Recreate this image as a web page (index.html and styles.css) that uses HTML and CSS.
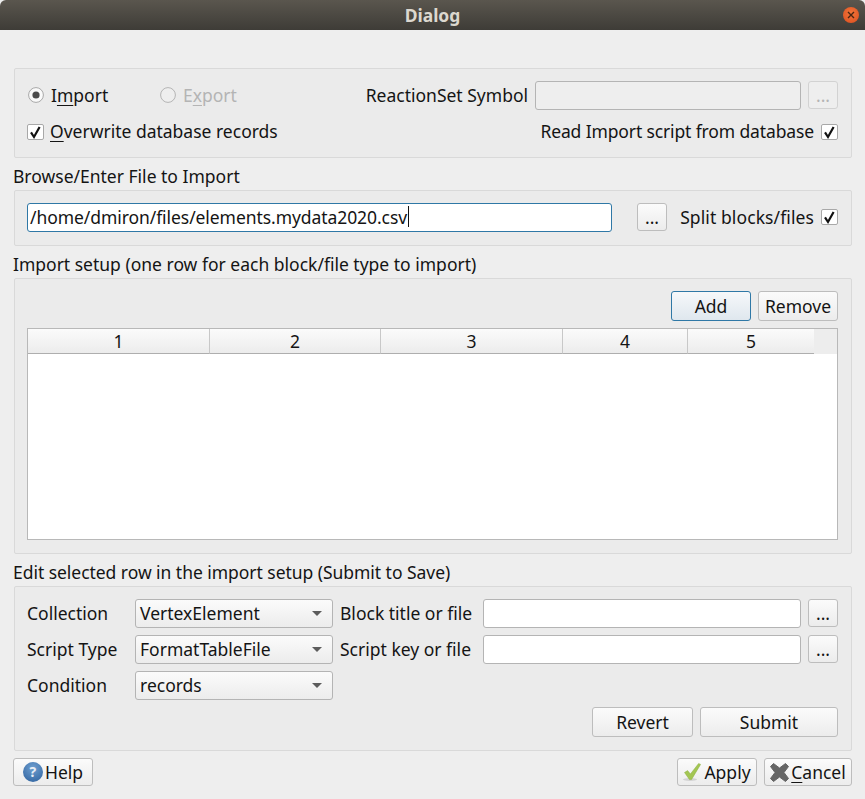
FILE: index.html
```html
<!DOCTYPE html>
<html lang="en">
<head>
    <meta charset="UTF-8">
    <meta name="viewport" content="width=device-width, initial-scale=1.0">
    <title>Dialog</title>
    <link rel="stylesheet" href="styles.css">
</head>
<body>
    <div class="window">
        <div class="titlebar">
            <span class="title">Dialog</span>
            <span class="close">
                <svg width="8" height="8" viewBox="0 0 8 8"><path d="M1 1L7 7M7 1L1 7" stroke="#4a2512" stroke-width="1.4" fill="none"/></svg>
            </span>
        </div>

        <div class="content">
            <div class="group group-mode">
                <div class="row">
                    <label class="option option-import">
                        <svg class="mark" width="16" height="16" viewBox="0 0 16 16"><circle cx="8" cy="8" r="7.4" fill="#fafafa" stroke="#a8a8a8"/><circle cx="8" cy="8" r="3.6" fill="#4c4c4c"/></svg>
                        <span>I<u>m</u>port</span>
                    </label>
                    <label class="option disabled">
                        <svg class="mark" width="16" height="16" viewBox="0 0 16 16"><circle cx="8" cy="8" r="7.4" fill="#eeeeee" stroke="#b4b4b4"/></svg>
                        <span>E<u>x</u>port</span>
                    </label>
                    <span class="text push">ReactionSet Symbol</span>
                    <div class="input input-symbol disabled-input"></div>
                    <button class="btn btn-dots" disabled>...</button>
                </div>
                <div class="row row-checks">
                    <label class="option">
                        <svg class="mark" width="17" height="16" viewBox="0 0 17 16"><rect x="0.5" y="0.5" width="16" height="15" rx="1.5" fill="#fff" stroke="#a8a8a8"/><path d="M4 8.4L7 13L12.6 3" fill="none" stroke="#111" stroke-width="2.2"/></svg>
                        <span><u>O</u>verwrite database records</span>
                    </label>
                    <label class="option option-check-right push">
                        <span class="read-script">Read Import script from database</span>
                        <svg class="mark" width="17" height="16" viewBox="0 0 17 16"><rect x="0.5" y="0.5" width="16" height="15" rx="1.5" fill="#fff" stroke="#a8a8a8"/><path d="M4 8.4L7 13L12.6 3" fill="none" stroke="#111" stroke-width="2.2"/></svg>
                    </label>
                </div>
            </div>

            <div class="section-label">Browse/Enter File to Import</div>
            <div class="group group-file">
                <div class="row">
                    <div class="input input-file">/home/dmiron/files/elements.mydata2020.csv<span class="caret"></span></div>
                    <button class="btn btn-dots btn-browse">...</button>
                    <label class="option option-check-right push">
                        <span class="split-files">Split blocks/files</span>
                        <svg class="mark" width="17" height="16" viewBox="0 0 17 16"><rect x="0.5" y="0.5" width="16" height="15" rx="1.5" fill="#fff" stroke="#a8a8a8"/><path d="M4 8.4L7 13L12.6 3" fill="none" stroke="#111" stroke-width="2.2"/></svg>
                    </label>
                </div>
            </div>

            <div class="section-label">Import setup (one row for each block/file type to import)</div>
            <div class="group group-setup">
                <div class="row table-actions">
                    <button class="btn btn-add">Add</button>
                    <button class="btn btn-remove">Remove</button>
                </div>
                <div class="table">
                    <div class="table-head">
                        <div class="col col-1">1</div>
                        <div class="col col-2">2</div>
                        <div class="col col-3">3</div>
                        <div class="col col-4">4</div>
                        <div class="col col-5">5</div>
                    </div>
                </div>
            </div>

            <div class="section-label section-edit">Edit selected row in the import setup (Submit to Save)</div>
            <div class="group group-edit">
                <div class="row edit-row">
                    <span class="text field-label">Collection</span>
                    <div class="combo">VertexElement<span class="arrow"></span></div>
                    <span class="text file-label">Block title or file</span>
                    <div class="input input-edit"></div>
                    <button class="btn btn-dots">...</button>
                </div>
                <div class="row edit-row">
                    <span class="text field-label">Script Type</span>
                    <div class="combo">FormatTableFile<span class="arrow"></span></div>
                    <span class="text file-label">Script key or file</span>
                    <div class="input input-edit"></div>
                    <button class="btn btn-dots">...</button>
                </div>
                <div class="row edit-row">
                    <span class="text field-label">Condition</span>
                    <div class="combo">records<span class="arrow"></span></div>
                </div>
                <div class="row edit-actions">
                    <button class="btn btn-revert">Revert</button>
                    <button class="btn btn-submit">Submit</button>
                </div>
            </div>

            <div class="footer">
                <button class="btn btn-footer btn-help">
                    <span class="help-icon">?</span>Help
                </button>
                <button class="btn btn-footer btn-apply push">
                    <svg width="19" height="20" viewBox="0 0 19 20"><ellipse cx="7" cy="17.5" rx="7" ry="1.5" fill="#d2d2d2"/><path d="M1.5 10.5L4.6 8.6L7.4 12L15.6 1.5L17.6 2.4L8.6 17.4L6.4 17.4Z" fill="#a3c653" stroke="#8fb043" stroke-width="0.5"/></svg>
                    Apply
                </button>
                <button class="btn btn-footer btn-cancel">
                    <svg width="19" height="19" viewBox="0 0 19 19"><path d="M0.5 3.5L3.5 0.5L9.5 5L15.5 0.5L18.5 3.5L14 9.5L18.5 15.5L15.5 18.5L9.5 14L3.5 18.5L0.5 15.5L5 9.5Z" fill="#656565" stroke="#656565" stroke-linejoin="round"/></svg>
                    <span><u>C</u>ancel</span>
                </button>
            </div>
        </div>
    </div>
</body>
</html>
```

FILE: styles.css
```css
* {
    box-sizing: border-box;
}
html, body {
    margin: 0;
    padding: 0;
    background-color: #eeeeee;
}
body {
    width: 865px;
    height: 799px;
    overflow: hidden;
    font-family: "Noto Sans", "Open Sans", sans-serif;
    font-size: 17.5px;
    line-height: 22px;
    color: #141414;
}
u {
    text-underline-offset: 3px;
}

/* title bar */
.titlebar {
    height: 30px;
    display: flex;
    align-items: center;
    justify-content: center;
    position: relative;
    background: linear-gradient(#5a564e, #3e3c37);
    border-radius: 6px 6px 0 0;
}
.title {
    color: #dcd8cf;
    font-weight: bold;
    font-size: 17.5px;
}
.close {
    position: absolute;
    right: 6px;
    top: 7px;
    width: 16px;
    height: 16px;
    border-radius: 50%;
    background: radial-gradient(circle at 50% 40%, #f4763a, #db4d1f);
    display: flex;
    align-items: center;
    justify-content: center;
}

/* layout */
.content {
    padding: 38px 13px 0 14px;
}
.group {
    background-color: #ebebeb;
    border: 1px solid #d9d9d9;
    border-radius: 2px;
    padding: 12px 13px 12px 12px;
}
.row {
    display: flex;
    align-items: flex-start;
}
.row > * {
    flex: none;
}
.push {
    margin-left: auto;
}
.section-label {
    height: 32px;
    margin-left: -1px;
    padding-top: 7px;
}
.section-edit {
    letter-spacing: -0.04px;
}
.group-mode {
    height: 90px;
}
.row-checks {
    margin-top: 10px;
    height: 22px;
}
.group-file {
    height: 56px;
}
.group-setup {
    height: 276px;
}
.group-edit {
    height: 165px;
}

/* radio and check options */
.option {
    display: flex;
    align-items: center;
    gap: 6px;
    min-height: 28px;
}
.row-checks .option {
    min-height: 22px;
}
.row-checks .option span {
    margin-bottom: 2px;
}
.option-import {
    width: 132px;
    margin-left: 1px;
    gap: 7px;
}
.option-check-right {
    gap: 7px;
}
.read-script {
    letter-spacing: -0.13px;
}
.split-files {
    letter-spacing: 0.1px;
}
.option.disabled {
    color: #b4b4b4;
    gap: 7px;
}
.mark {
    flex: none;
}
.text {
    white-space: nowrap;
    line-height: 29px;
}

/* inputs */
.input {
    height: 29px;
    background-color: #fff;
    border: 1px solid #b4b4b4;
    border-radius: 3px;
}
.input-symbol {
    width: 266px;
    margin: 0 7px;
}
.disabled-input {
    background-color: #eeeeee;
}
.input-file {
    width: 585px;
    border-color: #2f78a6;
    padding: 2px 0 0 2px;
    display: flex;
    white-space: nowrap;
    letter-spacing: -0.07px;
}
.caret {
    width: 1px;
    height: 21px;
    background-color: #111;
    margin-left: 1px;
}
.input-edit {
    width: 318px;
    margin-right: 7px;
}

/* buttons */
.btn {
    height: 28px;
    padding: 0;
    font: inherit;
    color: inherit;
    background: linear-gradient(#fbfbfb, #ececec);
    border: 1px solid #bdbdbd;
    border-radius: 3px;
}
.btn:disabled {
    color: #b4b4b4;
    background: #eeeeee;
    border-color: #d2d2d2;
}
.btn-dots {
    width: 30px;
}
.btn-browse {
    margin-left: 25px;
}
.btn-add {
    width: 80px;
    height: 30px;
    margin-left: auto;
    border-color: #2f78a6;
    background: linear-gradient(#f6f8fa, #dfe7ee);
}
.btn-remove {
    width: 80px;
    height: 30px;
    margin-left: 7px;
}
.table-actions {
    height: 30px;
}

/* table */
.table {
    height: 212px;
    margin-top: 7px;
    background-color: #fff;
    border: 1px solid #b8b8b8;
}
.table-head {
    display: flex;
    height: 25px;
    background-color: #ededed;
}
.col {
    height: 25px;
    text-align: center;
    line-height: 25px;
    background: linear-gradient(#fbfbfb, #ececec);
    border-right: 1px solid #c8c8c8;
    border-bottom: 1px solid #aeaeae;
}
.col-1 { width: 182px; }
.col-2 { width: 171px; }
.col-3 { width: 182px; }
.col-4 { width: 125px; }
.col-5 { width: 126px; border-right: none; }

/* edit section */
.edit-row {
    height: 29px;
    margin-bottom: 7px;
}
.field-label {
    width: 108px;
}
.combo {
    width: 198px;
    height: 29px;
    padding: 2px 0 0 4px;
    position: relative;
    background: linear-gradient(#fbfbfb, #ececec);
    border: 1px solid #b4b4b4;
    border-radius: 3px;
}
.arrow {
    position: absolute;
    right: 10px;
    top: 11px;
    border-left: 5px solid transparent;
    border-right: 5px solid transparent;
    border-top: 5px solid #5c5c5c;
}
.file-label {
    width: 143px;
    margin-left: 7px;
}
.edit-actions {
    justify-content: flex-end;
    gap: 7px;
}
.btn-revert {
    width: 101px;
    height: 30px;
}
.btn-submit {
    width: 138px;
    height: 30px;
}

/* footer */
.footer {
    display: flex;
    gap: 7px;
    margin: 7px 0 0 -1px;
}
.btn-footer {
    height: 28px;
    display: flex;
    align-items: center;
    justify-content: center;
    gap: 2px;
}
.btn-help {
    width: 80px;
}
.btn-apply {
    width: 80px;
}
.btn-cancel {
    width: 88px;
}
.help-icon {
    width: 20px;
    height: 20px;
    border-radius: 50%;
    color: #e8eef5;
    font-weight: bold;
    font-size: 14px;
    line-height: 20px;
    background: radial-gradient(circle at 50% 30%, #6f9fd0, #2b5f9c);
}
```
